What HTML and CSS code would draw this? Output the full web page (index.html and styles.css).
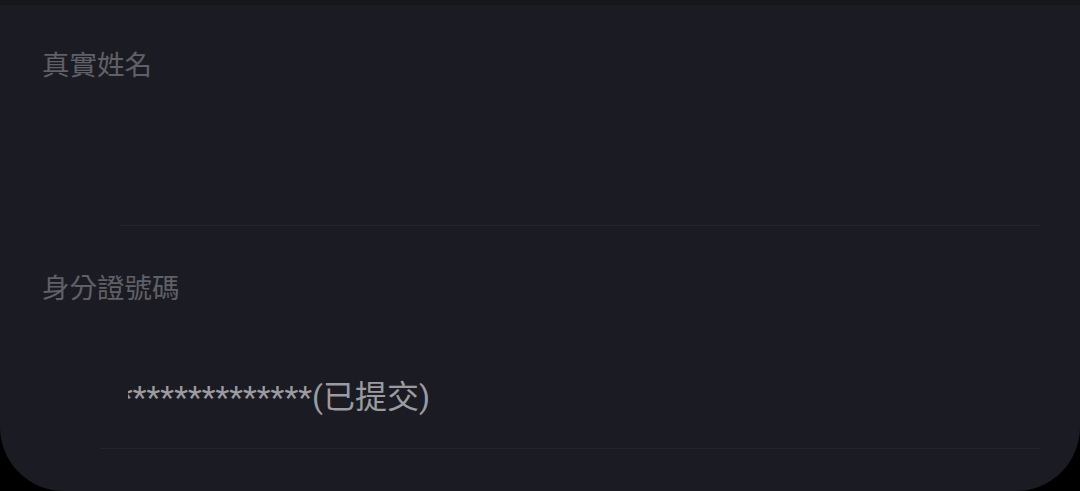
FILE: index.html
```html
<!DOCTYPE html>
<html lang="zh-Hant">
<head>
  <meta charset="UTF-8" />
  <meta name="viewport" content="width=device-width, initial-scale=1.0"/>
  <title>實名認證</title>
  <link rel="stylesheet" href="styles.css">
</head>
<body>
  <div class="card">
    <!-- 真實姓名 -->
    <div class="row">
      <label class="label">真實姓名</label>
      <div class="field field-name"></div>
    </div>

    <!-- 身分證號碼 -->
    <div class="row">
      <label class="label">身分證號碼</label>
      <div class="field field-id">
        <div class="value-clip">
          <span class="value">**************(已提交)</span>
        </div>
      </div>
    </div>
  </div>
</body>
</html>
```

FILE: styles.css
```css
html, body {
  margin: 0;
  padding: 0;
  background-color: #000;
}
body {
  font-family: Roboto, "Noto Sans CJK TC", sans-serif;
  width: 1080px;
  height: 491px;
  overflow: hidden;
}
.card {
  height: 491px;
  box-sizing: border-box;
  background-color: #1b1b23;
  border-top: 5px solid #16161b;
  border-radius: 0 0 64px 64px;
  padding: 45px 40px 0 42px;
}
.row + .row {
  margin-top: 47px;
}
.label {
  display: block;
  font-size: 27.5px;
  line-height: 32px;
  color: #606067;
}
.field {
  border-bottom: 1px solid #25252d;
}
.field-name {
  height: 143px;
  margin-left: 78px;
}
.field-id {
  margin-left: 58px;
  padding: 72px 0 31px 28px;
}
.value-clip {
  overflow: hidden;
  height: 40px;
}
.value {
  display: block;
  margin-left: -9px;
  font-size: 32px;
  line-height: 40px;
  color: #9b9ba0;
  white-space: nowrap;
}
```
